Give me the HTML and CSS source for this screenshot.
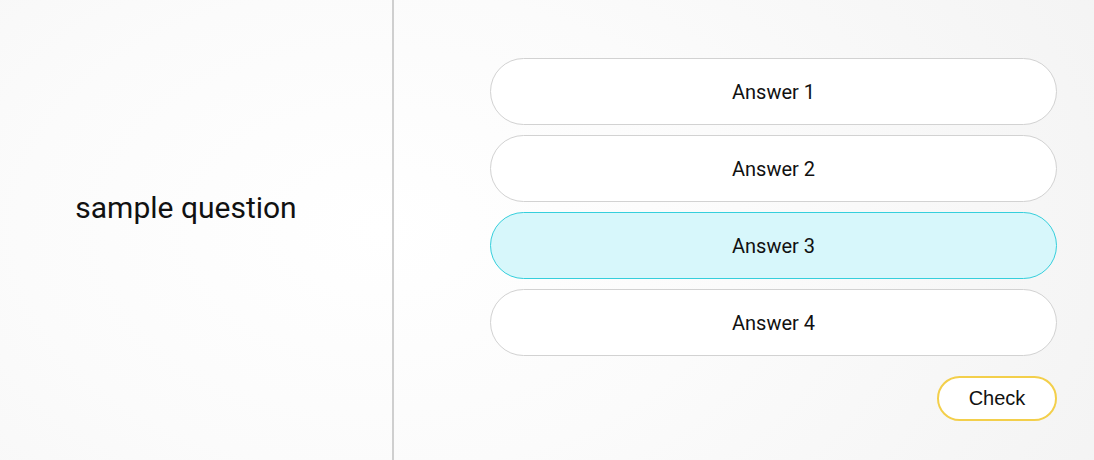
FILE: index.html
```html
<!DOCTYPE html>
<html>
<head>
<meta charset="utf-8">
<link rel="stylesheet" href="styles.css">
</head>
<body>
<div class="quiz">
  <div class="question">
    <p class="question-text">sample question</p>
  </div>
  <div class="answers">
    <div class="answer-list">
      <button class="answer">Answer 1</button>
      <button class="answer">Answer 2</button>
      <button class="answer selected">Answer 3</button>
      <button class="answer">Answer 4</button>
    </div>
    <div class="actions">
      <button class="check">Check</button>
    </div>
  </div>
</div>
</body>
</html>
```

FILE: styles.css
```css
html, body {
  margin: 0;
  height: 100%;
}
body {
  font-family: Roboto, "Liberation Sans", sans-serif;
  color: #111;
  background: radial-gradient(ellipse 900px 600px at 380px 230px, #ffffff 0%, #fbfbfb 40%, #f2f2f2 100%);
}
.quiz {
  display: flex;
  height: 460px;
}
.question {
  flex: none;
  width: 394px;
  border-right: 2px solid #cfcfcf;
  display: flex;
  align-items: center;
  justify-content: center;
  padding: 0 20px 44px 0;
  box-sizing: border-box;
}
.question-text {
  margin: 0;
  font-size: 30px;
  font-weight: 400;
  line-height: 36px;
}
.answers {
  flex: 1;
  padding: 58px 37px 0 96px;
  display: flex;
  flex-direction: column;
}
.answer-list {
  display: flex;
  flex-direction: column;
  gap: 10px;
}
.answer {
  height: 67px;
  border: 1px solid #d2d2d2;
  border-radius: 34px;
  background: #fff;
  font-family: Roboto, "Liberation Sans", sans-serif;
  font-size: 20px;
  color: #111;
  padding: 0;
  cursor: pointer;
}
.answer.selected {
  background: #d7f7fb;
  border-color: #35cfdc;
}
.actions {
  display: flex;
  justify-content: flex-end;
  margin-top: 20px;
}
.check {
  width: 120px;
  height: 45px;
  border: 2px solid #f3cf4b;
  border-radius: 23px;
  background: #fff;
  font-family: "Liberation Sans", Arial, sans-serif;
  font-size: 20px;
  color: #111;
  padding: 0;
}
```
